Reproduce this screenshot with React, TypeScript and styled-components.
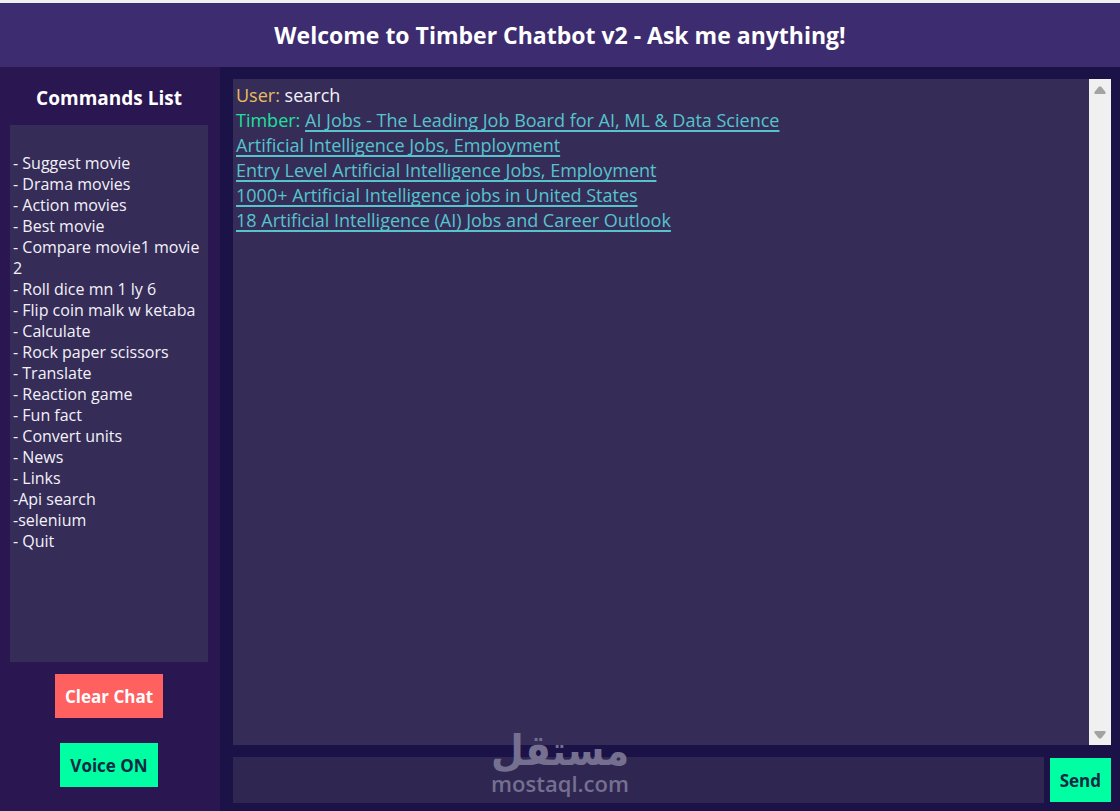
import React from "react";
import styled, { createGlobalStyle } from "styled-components";

const GlobalStyle = createGlobalStyle`
  * { box-sizing: border-box; }
  body {
    margin: 0;
    background: #1b1247;
    font-family: "Open Sans", "Noto Sans", sans-serif;
    color: #f4f1f8;
  }
`;

const Page = styled.div`
  position: relative;
  min-height: 100vh;
  display: flex;
  flex-direction: column;
  border-top: 3px solid #f0f0f2;
`;

const Header = styled.header`
  padding: 16px;
  background: #3d2c70;
  text-align: center;
`;

const Title = styled.h1`
  margin: 0;
  font-size: 23px;
  line-height: 32px;
  font-weight: 700;
  color: #ffffff;
`;

const Body = styled.div`
  flex: 1;
  display: flex;
`;

const Sidebar = styled.aside`
  flex: 0 0 220px;
  display: flex;
  flex-direction: column;
  align-items: center;
  padding: 19px 12px 24px 10px;
  background: #2a1650;
`;

const SidebarTitle = styled.h2`
  margin: 0 0 15px;
  font-size: 19px;
  line-height: 24px;
  font-weight: 700;
  color: #ffffff;
`;

const CommandPanel = styled.div`
  flex: 1;
  align-self: stretch;
  margin-bottom: 12px;
  padding: 28px 3px 0;
  background: #352d58;
`;

const CommandList = styled.ul`
  margin: 0;
  padding: 0;
  list-style: none;
  font-size: 16px;
  line-height: 21px;
`;

const Button = styled.button<{ $tone: "danger" | "accent" }>`
  height: 44px;
  padding: 1px 10px 0;
  border: 0;
  font-family: inherit;
  font-size: 17px;
  line-height: 24px;
  font-weight: 700;
  color: ${(p) => (p.$tone === "danger" ? "#ffffff" : "#0d2a44")};
  background: ${(p) => (p.$tone === "danger" ? "#ff6060" : "#00ffa3")};
  cursor: pointer;
`;

const ButtonStack = styled.div`
  display: flex;
  flex-direction: column;
  align-items: center;
  gap: 25px;
`;

const Main = styled.main`
  flex: 1;
  min-width: 0;
  display: flex;
  flex-direction: column;
  gap: 12px;
  padding: 12px 9px 8px 13px;
`;

const ChatFrame = styled.section`
  flex: 1;
  display: flex;
  background: #352d58;
`;

const Messages = styled.div`
  flex: 1;
  min-width: 0;
  padding: 4px 3px;
  font-size: 18px;
  line-height: 25px;
`;

const Line = styled.p`
  margin: 0;
`;

const Speaker = styled.span<{ $who: "user" | "bot" }>`
  color: ${(p) => (p.$who === "user" ? "#e9bd5f" : "#1fe09c")};
`;

const ResultLink = styled.a`
  color: #55c4cc;
  text-decoration: underline 2px;
  text-underline-offset: 3px;
  text-decoration-skip-ink: none;
`;

const ScrollTrack = styled.div`
  flex: 0 0 22px;
  display: flex;
  flex-direction: column;
  justify-content: space-between;
  align-items: center;
  padding: 7px 0 6px;
  background: #f0f0f0;
`;

const Composer = styled.form`
  display: flex;
  align-items: center;
  gap: 6px;
`;

const MessageInput = styled.input`
  flex: 1;
  min-width: 0;
  height: 46px;
  padding: 0 8px;
  border: 0;
  background: #2f2752;
  color: #ffffff;
  font-family: inherit;
  font-size: 18px;
`;

const Watermark = styled.div`
  position: absolute;
  left: 0;
  right: 0;
  bottom: 17px;
  display: flex;
  flex-direction: column;
  align-items: center;
  color: #757090;
  pointer-events: none;
`;

const WatermarkArabic = styled.span`
  font-family: "DejaVu Sans Condensed", "DejaVu Sans", sans-serif;
  font-size: 42px;
  line-height: 42px;
  font-weight: 700;
`;

const WatermarkLatin = styled.span`
  font-size: 22px;
  line-height: 22px;
  font-weight: 600;
`;

const commands = [
  "- Suggest movie",
  "- Drama movies",
  "- Action movies",
  "- Best movie",
  "- Compare movie1 movie 2",
  "- Roll dice mn 1 ly 6",
  "- Flip coin malk w ketaba",
  "- Calculate",
  "- Rock paper scissors",
  "- Translate",
  "- Reaction game",
  "- Fun fact",
  "- Convert units",
  "- News",
  "- Links",
  "-Api search",
  "-selenium",
  "- Quit",
];

const results = [
  "AI Jobs - The Leading Job Board for AI, ML & Data Science",
  "Artificial Intelligence Jobs, Employment",
  "Entry Level Artificial Intelligence Jobs, Employment",
  "1000+ Artificial Intelligence jobs in United States",
  "18 Artificial Intelligence (AI) Jobs and Career Outlook",
];

export default function App() {
  return (
    <>
      <GlobalStyle />
      <Page>
        <Header>
          <Title>Welcome to Timber Chatbot v2 - Ask me anything!</Title>
        </Header>
        <Body>
          <Sidebar>
            <SidebarTitle>Commands List</SidebarTitle>
            <CommandPanel>
              <CommandList>
                {commands.map((c) => (
                  <li key={c}>{c}</li>
                ))}
              </CommandList>
            </CommandPanel>
            <ButtonStack>
              <Button type="button" $tone="danger">Clear Chat</Button>
              <Button type="button" $tone="accent">Voice ON</Button>
            </ButtonStack>
          </Sidebar>
          <Main>
            <ChatFrame aria-label="Conversation">
              <Messages>
                <Line>
                  <Speaker $who="user">User:</Speaker> search
                </Line>
                {results.map((r, i) => (
                  <Line key={r}>
                    {i === 0 && <><Speaker $who="bot">Timber:</Speaker>{" "}</>}
                    <ResultLink href="#">{r}</ResultLink>
                  </Line>
                ))}
              </Messages>
              <ScrollTrack aria-hidden="true">
                <svg width="12" height="8" viewBox="0 0 12 8">
                  <path d="M5 .5h2L11.5 6v2H.5V6z" fill="#a3a3a3" />
                </svg>
                <svg width="12" height="8" viewBox="0 0 12 8">
                  <path d="M5 7.5h2L11.5 2V0H.5v2z" fill="#a3a3a3" />
                </svg>
              </ScrollTrack>
            </ChatFrame>
            <Composer onSubmit={(e) => e.preventDefault()}>
              <MessageInput type="text" aria-label="Message" />
              <Button type="submit" $tone="accent">Send</Button>
            </Composer>
          </Main>
        </Body>
        <Watermark>
          <WatermarkArabic lang="ar" dir="rtl">مستقل</WatermarkArabic>
          <WatermarkLatin>mostaql.com</WatermarkLatin>
        </Watermark>
      </Page>
    </>
  );
}
